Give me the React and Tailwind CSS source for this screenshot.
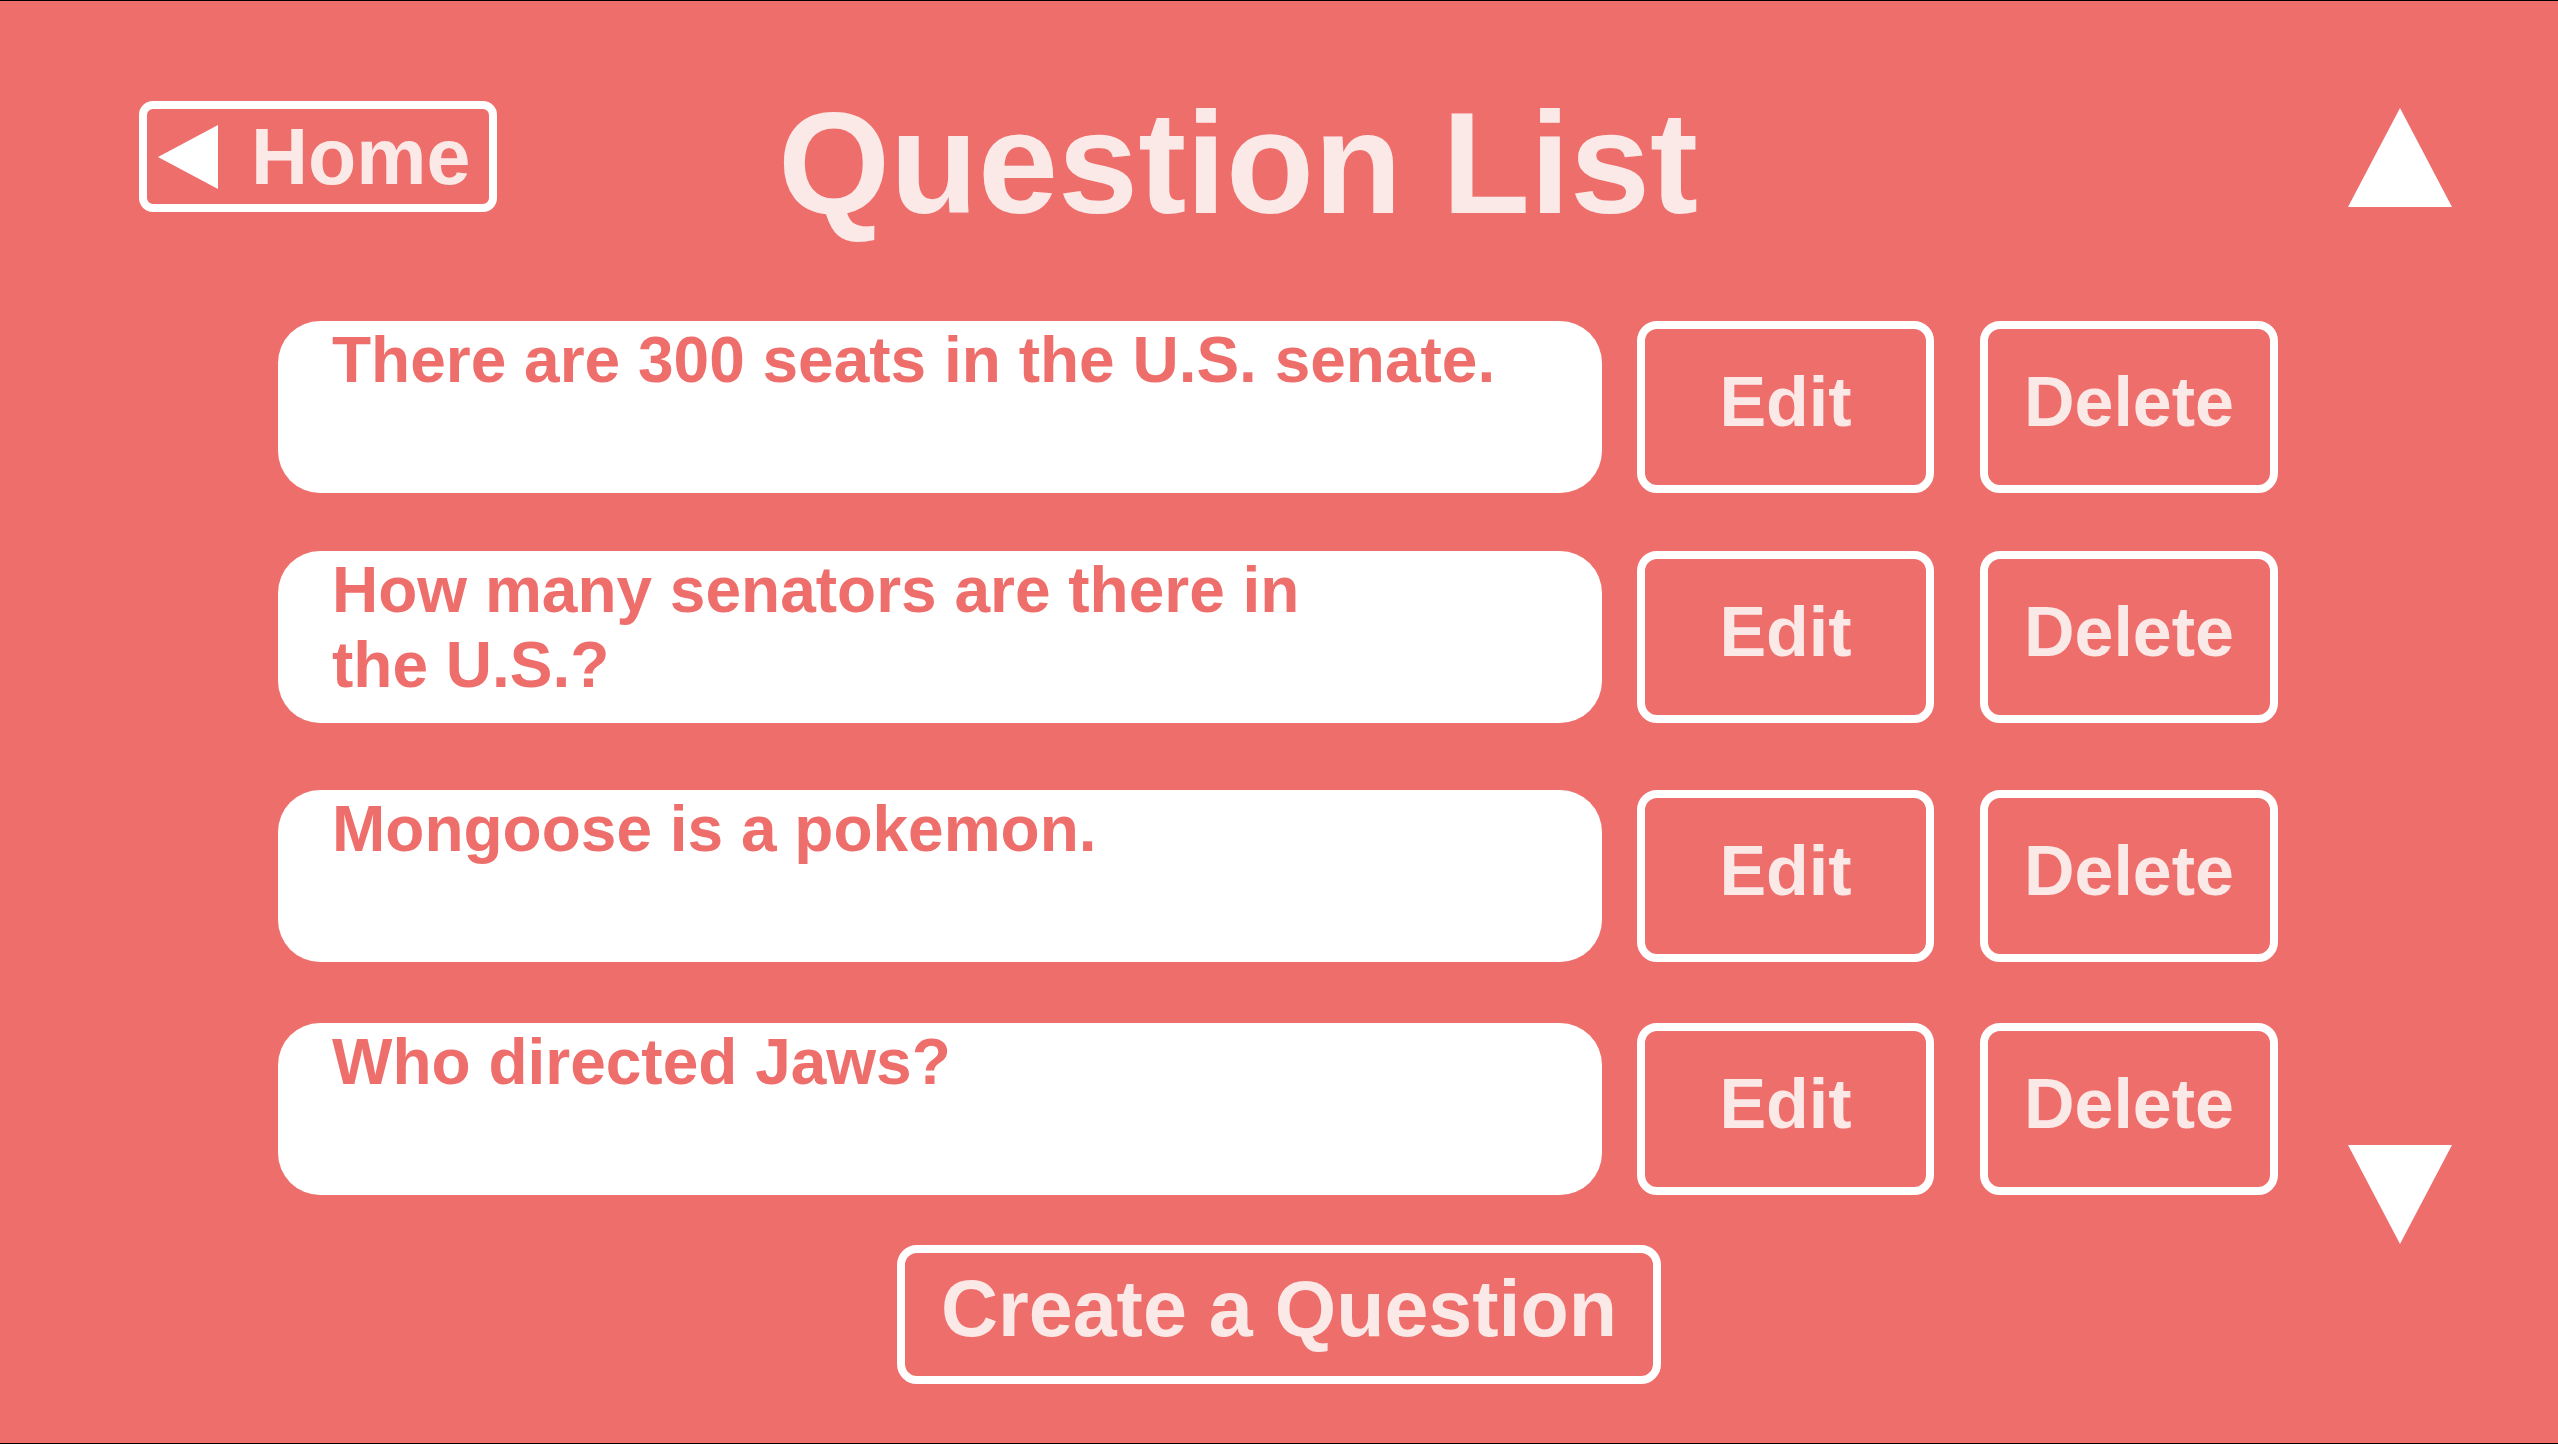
import React from 'react';

const questions = [
  { id: 1, lines: ['There are 300 seats in the U.S. senate.'], gap: 'mt-[85px]' },
  { id: 2, lines: ['How many senators are there in', 'the U.S.?'], gap: 'mt-[58px]' },
  { id: 3, lines: ['Mongoose is a pokemon.'], gap: 'mt-[67px]' },
  { id: 4, lines: ['Who directed Jaws?'], gap: 'mt-[61px]' },
];

const Triangle = ({ dir }) => {
  const pts = dir === 'up' ? '52,0 104,99 0,99' : '0,0 104,0 52,99';
  return (
    <svg width="104" height="99" viewBox="0 0 104 99" className="block shrink-0">
      <polygon points={pts} fill="#ffffff" />
    </svg>
  );
};

const OutlineButton = ({ label, className }) => (
  <button
    className={`flex items-center justify-center pb-[10px] border-[8px] border-white rounded-[20px] text-[70px] font-bold leading-none text-[#fbe9e8] ${className}`}
  >
    {label}
  </button>
);

const App = () => {
  return (
    <div
      className="w-full h-[1444px] bg-[#ee6e6b] border-t border-b border-black overflow-hidden"
      style={{ fontFamily: '"Liberation Sans", Arial, sans-serif' }}
    >
      {/* Header */}
      <div className="flex items-start pt-[100px]">
        <button className="ml-[139px] w-[358px] h-[111px] border-[8px] border-white rounded-[14px] flex items-center pl-[11px]">
          <svg width="60" height="64" viewBox="0 0 60 64" className="block shrink-0">
            <polygon points="60,0 60,64 0,32" fill="#ffffff" />
          </svg>
          <span className="ml-[33px] text-[79px] font-bold leading-none text-[#fbe9e8]">Home</span>
        </button>
        <h1 className="ml-[281px] mt-[-9px] text-[144px] font-bold leading-none text-[#fbe9e8]">Question List</h1>
        <div className="ml-auto mr-[106px] mt-[7px]">
          <Triangle dir="up" />
        </div>
      </div>

      {/* Question rows */}
      {questions.map((q, i) => (
        <div key={q.id} className={`flex items-start pl-[278px] ${q.gap}`}>
          <div className="w-[1324px] h-[172px] shrink-0 rounded-[42px] bg-white pl-[54px] pt-[2px]">
            {q.lines.map((line) => (
              <p key={line} className="text-[64px] font-bold leading-[75px] text-[#ee6e6b] whitespace-nowrap">
                {line}
              </p>
            ))}
          </div>
          <OutlineButton label="Edit" className="ml-[35px] w-[297px] h-[172px] shrink-0" />
          <OutlineButton label="Delete" className="ml-[46px] w-[298px] h-[172px] shrink-0" />
          {i === questions.length - 1 && (
            <div className="ml-[70px] mt-[122px]">
              <Triangle dir="down" />
            </div>
          )}
        </div>
      ))}

      <div className="flex justify-center mt-[1px]">
        <button className="w-[764px] h-[139px] border-[8px] border-white rounded-[20px] flex items-center justify-center pb-[12px] text-[79px] font-bold leading-none text-[#fbe9e8]">
          Create a Question
        </button>
      </div>
    </div>
  );
};

export default App;
